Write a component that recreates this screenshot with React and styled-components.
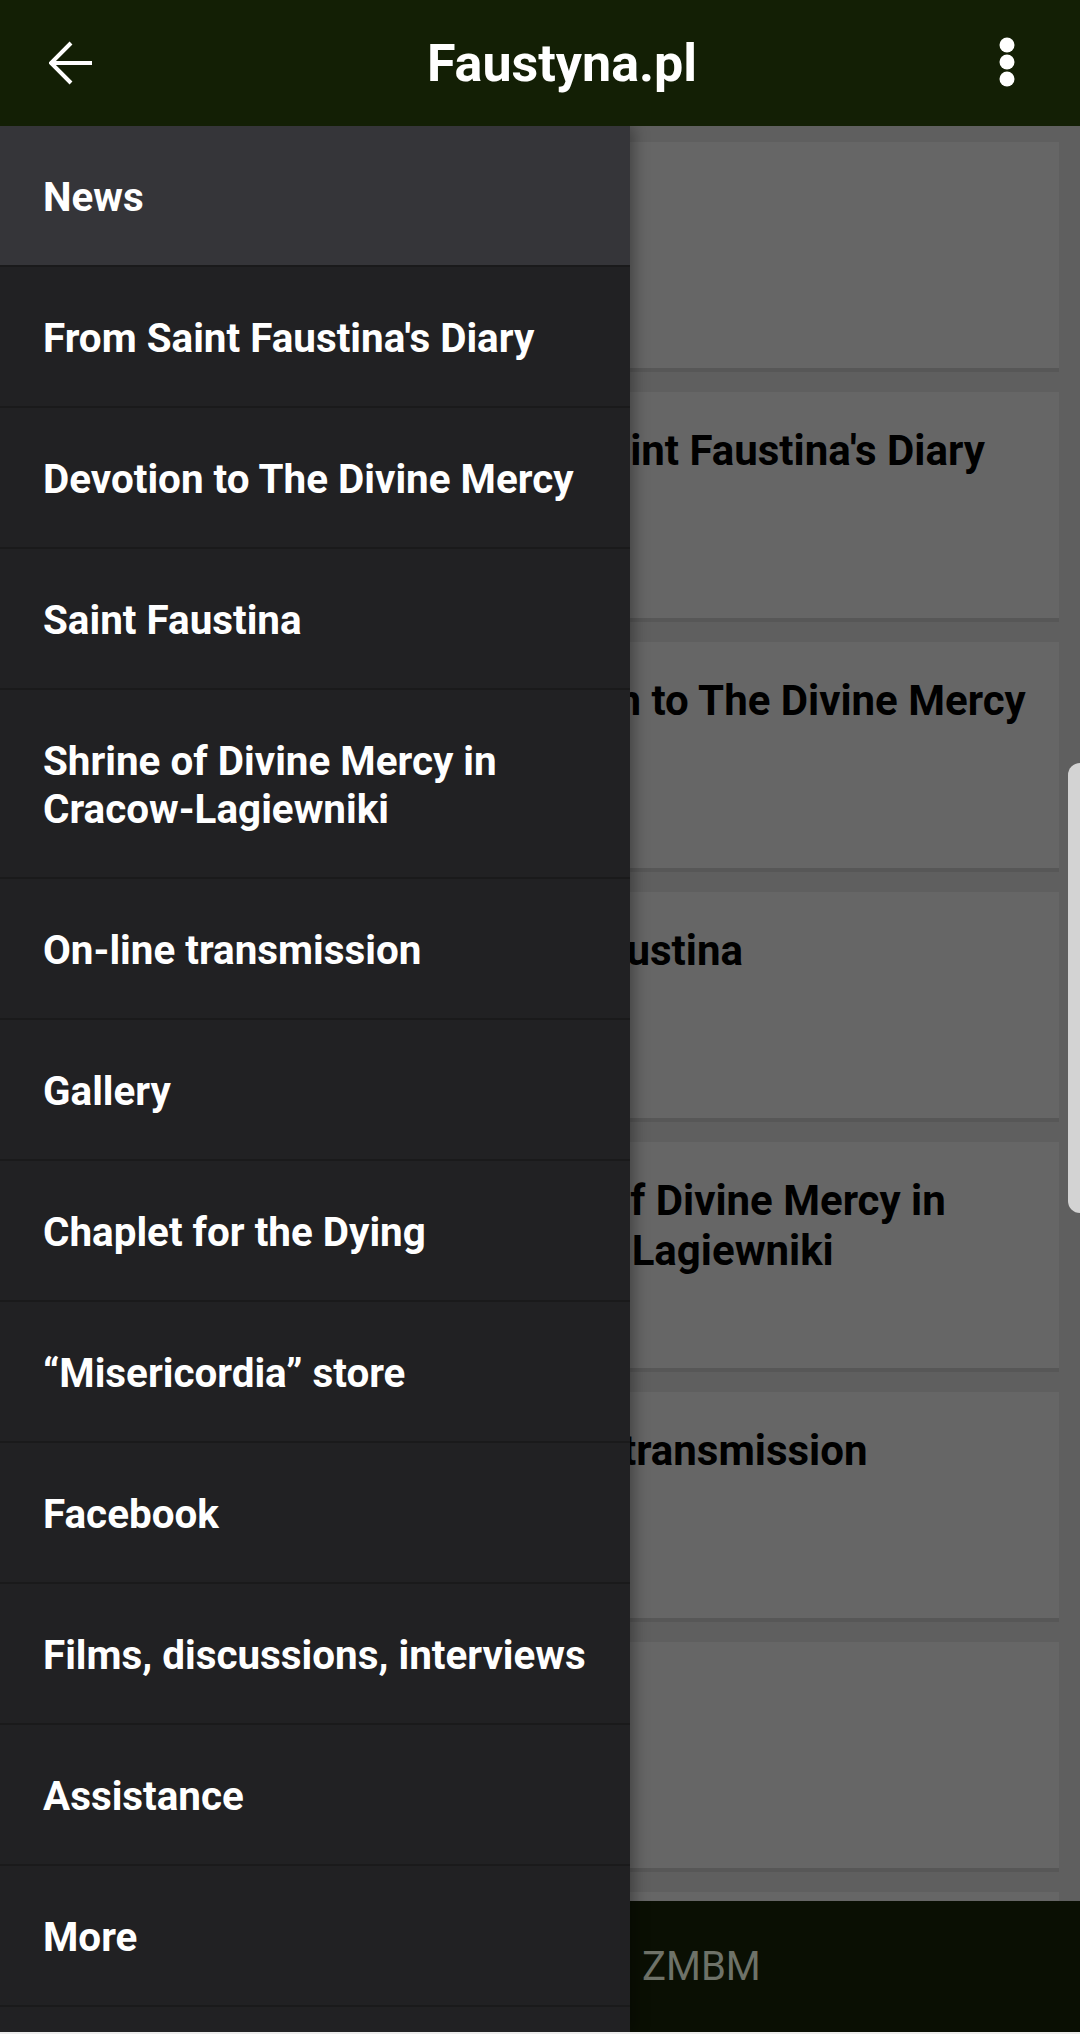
import React from "react";
import styled, { createGlobalStyle } from "styled-components";

const GlobalStyle = createGlobalStyle`
  html, body {
    margin: 0;
    padding: 0;
    background: #5f5f5f;
  }

  * {
    box-sizing: border-box;
  }
`;

const Screen = styled.div`
  position: relative;
  width: 1080px;
  height: 2034px;
  display: flex;
  flex-direction: column;
  overflow: hidden;
  font-family: Roboto, "Liberation Sans", sans-serif;
`;

const TopBar = styled.header`
  height: 126px;
  flex-shrink: 0;
  display: grid;
  grid-template-columns: 140px 1fr 96px;
  align-items: center;
  background-color: #131f05;
  color: #ffffff;
`;

const IconButton = styled.button`
  display: flex;
  align-items: center;
  justify-content: center;
  width: ${(p) => p.$w}px;
  height: ${(p) => p.$h}px;
  margin-left: ${(p) => p.$offset}px;
  padding: 0;
  border: none;
  background: none;
  color: inherit;
`;

const Title = styled.h1`
  margin: 0;
  text-align: center;
  font-size: 52px;
  font-weight: 700;
  letter-spacing: 0;
`;

const Body = styled.main`
  position: relative;
  flex: 1;
  display: flex;
  flex-direction: column;
  overflow: hidden;
`;

const Feed = styled.div`
  flex: 1;
  display: flex;
  flex-direction: column;
  gap: 20px;
  padding: 16px 21px 0;
  overflow: hidden;
  background-color: #5f5f5f;
`;

const Card = styled.article`
  flex-shrink: 0;
  height: 230px;
  display: flex;
  align-items: flex-start;
  gap: 24px;
  padding: 34px 16px 0 0;
  background-color: #666666;
  border-bottom: 4px solid #575757;
`;

const Thumb = styled.div`
  flex-shrink: 0;
  width: 429px;
  height: 180px;
  background-color: #5a5a5a;
`;

const CardTitle = styled.h2`
  margin: 0;
  font-size: 42px;
  line-height: 50px;
  font-weight: 700;
  color: #000000;
`;

const Footer = styled.footer`
  height: 131px;
  flex-shrink: 0;
  display: flex;
  align-items: center;
  padding-left: 642px;
  background-color: #0a0f03;
  color: #6e7268;
  font-size: 40px;
  font-weight: 400;
`;

const NavEdge = styled.div`
  height: 2px;
  flex-shrink: 0;
  background-color: #ececec;
`;

const Drawer = styled.nav`
  position: absolute;
  top: 0;
  left: 0;
  bottom: 0;
  width: 630px;
  background-color: #212123;
  box-shadow: 4px 0 14px rgba(0, 0, 0, 0.35);
  overflow: hidden;
`;

const MenuList = styled.ul`
  margin: 0;
  padding: 0;
  list-style: none;
`;

const MenuItem = styled.li`
  padding: 48px 20px 43px 43px;
  border-bottom: 2px solid #1a1a1b;
  background-color: ${(p) => (p.$active ? "#353539" : "transparent")};
  color: #ffffff;
  font-size: 40.4px;
  line-height: 48px;
  font-weight: 700;
`;

const EdgeHandle = styled.div`
  position: absolute;
  top: 763px;
  right: 0;
  width: 12px;
  height: 450px;
  border-radius: 12px 0 0 12px;
  background-color: #d3d3d3;
`;

const menu = [
  "News",
  "From Saint Faustina's Diary",
  "Devotion to The Divine Mercy",
  "Saint Faustina",
  "Shrine of Divine Mercy in Cracow-Lagiewniki",
  "On-line transmission",
  "Gallery",
  "Chaplet for the Dying",
  "\u201cMisericordia\u201d store",
  "Facebook",
  "Films, discussions, interviews",
  "Assistance",
  "More",
  "Contact",
];

const cards = menu.slice(0, 8);

function BackArrow() {
  return (
    <svg width="44" height="44" viewBox="0 0 44 44" fill="none">
      <path
        d="M43 22H3M22 2L2 22l20 20"
        stroke="#ffffff"
        strokeWidth="4"
        strokeLinejoin="miter"
      />
    </svg>
  );
}

function MoreDots() {
  return (
    <svg width="30" height="52" viewBox="0 0 30 52" fill="#ffffff">
      <circle cx="15" cy="8" r="7.5" />
      <circle cx="15" cy="25" r="7.5" />
      <circle cx="15" cy="42" r="7.5" />
    </svg>
  );
}

export default function App() {
  return (
    <>
      <GlobalStyle />
      <Screen>
        <TopBar>
          <IconButton $w={44} $h={44} $offset={49} aria-label="Back">
            <BackArrow />
          </IconButton>
          <Title>Faustyna.pl</Title>
          <IconButton $w={30} $h={52} $offset={8} aria-label="More options">
            <MoreDots />
          </IconButton>
        </TopBar>

        <Body>
          <Feed>
            {cards.map((title) => (
              <Card key={title}>
                <Thumb />
                <CardTitle>{title}</CardTitle>
              </Card>
            ))}
          </Feed>
          <Footer>ZMBM</Footer>

          <Drawer>
            <MenuList>
              {menu.map((item, i) => (
                <MenuItem key={item} $active={i === 0}>
                  {item}
                </MenuItem>
              ))}
            </MenuList>
          </Drawer>
        </Body>
        <NavEdge />
        <EdgeHandle />
      </Screen>
    </>
  );
}
